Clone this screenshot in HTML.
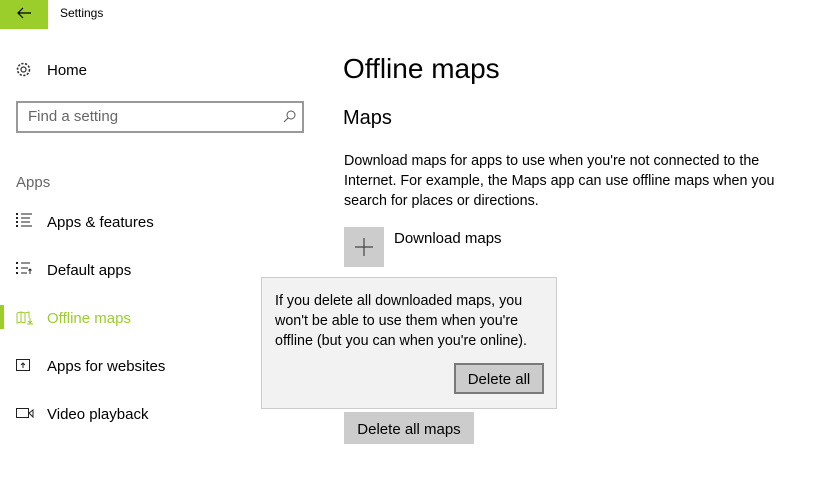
<!DOCTYPE html>
<html><head><meta charset="utf-8"><style>
body{margin:0;width:840px;height:493px;background:#fff;font-family:"Liberation Sans",sans-serif;color:#000;position:relative;overflow:hidden}
.a{position:absolute}
.nav{font-size:15px;left:47px}
svg{position:absolute}
</style></head><body>
<div class="a" style="left:0;top:0;width:48px;height:29px;background:#9bcd2b"></div>
<svg style="left:16px;top:6px" width="16" height="14" viewBox="0 0 16 14"><path d="M15 7H2M7 2L2 7l5 5" fill="none" stroke="#000" stroke-width="1.2"/></svg>
<div class="a" style="left:60px;top:6px;font-size:12px">Settings</div>
<svg style="left:15px;top:61px" width="17" height="17" viewBox="0 0 17 17"><circle cx="8.5" cy="8.5" r="2.5" fill="none" stroke="#333" stroke-width="1.2"/><circle cx="8.5" cy="8.5" r="6" fill="none" stroke="#333" stroke-width="1.6" stroke-dasharray="2.2 1.5"/></svg>
<div class="a nav" style="top:62px;font-size:15px">Home</div>
<div class="a" style="left:16px;top:101px;width:284px;height:28px;border:2px solid #999"></div>
<div class="a" style="left:28px;top:108px;font-size:15px;color:#666">Find a setting</div>
<svg style="left:283px;top:110px" width="13" height="13" viewBox="0 0 13 13"><circle cx="8" cy="5" r="4" fill="none" stroke="#555"/><path d="M5 8L1 12" stroke="#555"/></svg>
<div class="a" style="left:16px;top:174px;font-size:15px;color:#666">Apps</div>
<svg style="left:16px;top:213px" width="18" height="15" viewBox="0 0 18 15"><g fill="#222"><rect x="0" y="0" width="2" height="2"/><rect x="0" y="4" width="2" height="2"/><rect x="0" y="8" width="2" height="2"/><rect x="0" y="12" width="2" height="2"/></g><path d="M5 1H16M5 5H14M5 9H14M5 13H16" stroke="#222"/></svg>
<div class="a nav" style="top:214px">Apps &amp; features</div>
<svg style="left:16px;top:262px" width="18" height="14" viewBox="0 0 18 14"><g fill="#222"><rect x="0" y="0" width="2" height="2"/><rect x="0" y="5" width="2" height="2"/><rect x="0" y="10" width="2" height="2"/></g><path d="M5 1H14M5 6H12M5 11H11M14 12V7M12.5 8.5L14 7l1.5 1.5" stroke="#222" fill="none"/></svg>
<div class="a nav" style="top:262px">Default apps</div>
<div class="a" style="left:0;top:305px;width:4px;height:24px;background:#9bcd2b"></div>
<svg style="left:16px;top:311px" width="18" height="14" viewBox="0 0 18 14"><path d="M1 2L5 1l4 1 4-1v6M1 2v10l4-1 4 1M5 1v10M9 2v10M14 7v5M12 10l2 2 2-2M11 13H17" stroke="#9bcd2b" fill="none"/></svg>
<div class="a nav" style="top:310px;color:#9bcd2b">Offline maps</div>
<svg style="left:16px;top:359px" width="16" height="13" viewBox="0 0 16 13"><rect x="0.5" y="0.5" width="13" height="11" fill="none" stroke="#222"/><path d="M7 9V4M5 6l2-2 2 2" stroke="#222" fill="none"/></svg>
<div class="a nav" style="top:358px">Apps for websites</div>
<svg style="left:16px;top:407px" width="18" height="12" viewBox="0 0 18 12"><rect x="0.5" y="1.5" width="12" height="9" fill="none" stroke="#222"/><path d="M13 6l4-3v7z" fill="none" stroke="#222"/></svg>
<div class="a nav" style="top:406px">Video playback</div>

<div class="a" style="left:343px;top:53px;font-size:28px">Offline maps</div>
<div class="a" style="left:343px;top:107px;font-size:20px">Maps</div>
<div class="a" style="left:344px;top:151px;width:470px;font-size:14.3px;line-height:20px">Download maps for apps to use when you're not connected to the Internet. For example, the Maps app can use offline maps when you search for places or directions.</div>
<div class="a" style="left:344px;top:227px;width:40px;height:40px;background:#ccc"></div>
<svg style="left:354px;top:237px" width="20" height="20"><path d="M10 1V19M1 10H19" stroke="#444" stroke-width="1.2"/></svg>
<div class="a" style="left:394px;top:230px;font-size:15px">Download maps</div>
<div class="a" style="left:344px;top:412px;width:130px;height:32px;background:#ccc"></div>
<div class="a" style="left:344px;top:421px;width:130px;text-align:center;font-size:15px">Delete all maps</div>
<div class="a" style="left:261px;top:277px;width:294px;height:130px;background:#f2f2f2;border:1px solid #ccc"></div>
<div class="a" style="left:275px;top:291px;width:275px;font-size:14.3px;line-height:20px">If you delete all downloaded maps, you won't be able to use them when you're offline (but you can when you're online).</div>
<div class="a" style="left:454px;top:363px;width:86px;height:27px;background:#ccc;border:2px solid #7a7a7a"></div>
<div class="a" style="left:454px;top:371px;width:90px;text-align:center;font-size:15px">Delete all</div>
</body></html>
